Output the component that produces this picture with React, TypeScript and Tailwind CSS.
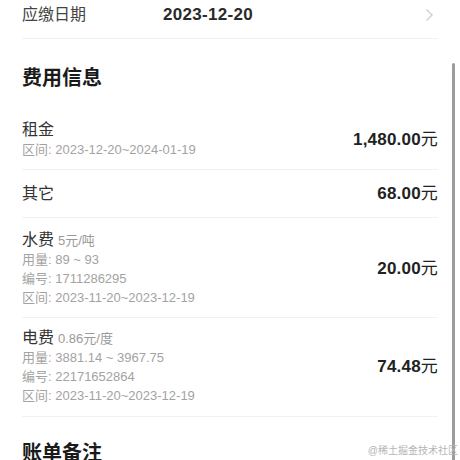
const font = "font-['Liberation_Sans','Noto_Sans_CJK_SC',sans-serif]"

type Fee = {
  name: string
  unit?: string
  lines: string[]
  amount: string
  pad: string
}

const fees: Fee[] = [
  { name: "租金", lines: ["区间: 2023-12-20~2024-01-19"], amount: "1,480.00", pad: "pt-3 pb-[10px]" },
  { name: "其它", lines: [], amount: "68.00", pad: "pt-[13px] pb-3" },
  {
    name: "水费",
    unit: "5元/吨",
    lines: ["用量: 89 ~ 93", "编号: 1711286295", "区间: 2023-11-20~2023-12-19"],
    amount: "20.00",
    pad: "pt-3 pb-[10px]",
  },
  {
    name: "电费",
    unit: "0.86元/度",
    lines: ["用量: 3881.14 ~ 3967.75", "编号: 22171652864", "区间: 2023-11-20~2023-12-19"],
    amount: "74.48",
    pad: "pt-[10px] pb-[11px]",
  },
]

function FeeRow({ fee }: { fee: Fee }) {
  return (
    <div className={`flex items-center justify-between border-b border-[#f1f1f1] ${fee.pad}`}>
      <div className="flex flex-col">
        <div className="flex h-[20px] items-baseline">
          <span className="text-[16px] leading-[20px] text-[#333]">{fee.name}</span>
          {fee.unit && <span className="ml-1 text-[13px] leading-[20px] text-[#9a9a9a]">{fee.unit}</span>}
        </div>
        {fee.lines.map((l) => (
          <span key={l} className="h-[19px] text-[13px] leading-[19px] text-[#a3a3a3]">
            {l}
          </span>
        ))}
      </div>
      <span className="text-[17px] font-bold leading-[22px] text-[#222] tracking-[0.2px]">
        {fee.amount}
        <span className="font-normal text-[17px]">元</span>
      </span>
    </div>
  )
}

export default function App() {
  return (
    <div className={`relative w-[460px] h-[460px] overflow-hidden bg-white ${font}`}>
      <div className="px-[22px]">
        <div className="flex items-center border-b border-[#f1f1f1] pt-1 pb-3">
          <span className="w-[141px] text-[16px] leading-[22px] text-[#444]">应缴日期</span>
          <span className="flex-1 text-[17px] font-bold leading-[22px] text-[#2a2a2a] tracking-[0.3px]">
            2023-12-20
          </span>
          <svg width="9" height="14" viewBox="0 0 9 14" className="mr-[4px]">
            <path d="M1.5 1.5 L7 7 L1.5 12.5" fill="none" stroke="#cfcfcf" strokeWidth="1.4" />
          </svg>
        </div>

        <h2 className="pt-[25px] pb-4 text-[20px] font-bold leading-[28px] text-[#1a1a1a]">费用信息</h2>

        {fees.map((f) => (
          <FeeRow key={f.name} fee={f} />
        ))}

        <h2 className="pt-[22px] text-[20px] font-bold leading-[28px] text-[#1a1a1a]">账单备注</h2>
      </div>

      <div className="absolute right-[5px] top-[63px] h-[420px] w-[3px] rounded-full bg-[#9c9c9c]" />
      <span className="absolute right-[2px] top-[444px] text-[10px] leading-[14px] text-[#b5b5b5]">
        @稀土掘金技术社区
      </span>
    </div>
  )
}
